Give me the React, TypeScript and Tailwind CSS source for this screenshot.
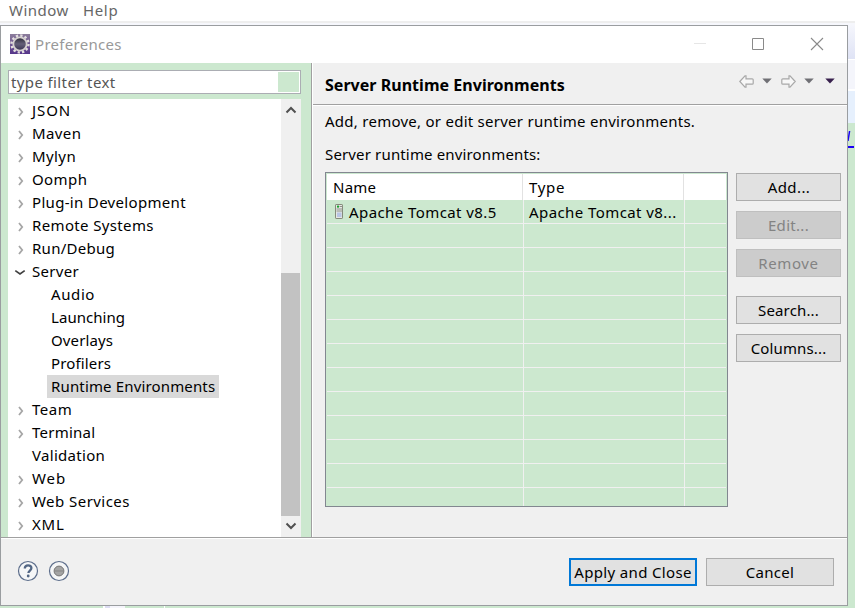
import React from "react";

type Item = { label: string; kind: "closed" | "open" | "leaf" | "child"; track: string; selected?: boolean };

const items: Item[] = [
  { label: "JSON", kind: "closed", track: "tracking-[0.9px]" },
  { label: "Maven", kind: "closed", track: "tracking-[0.4px]" },
  { label: "Mylyn", kind: "closed", track: "tracking-[0.4px]" },
  { label: "Oomph", kind: "closed", track: "tracking-[0.4px]" },
  { label: "Plug-in Development", kind: "closed", track: "tracking-[0.32px]" },
  { label: "Remote Systems", kind: "closed", track: "tracking-[0.36px]" },
  { label: "Run/Debug", kind: "closed", track: "tracking-[0.28px]" },
  { label: "Server", kind: "open", track: "tracking-[0.3px]" },
  { label: "Audio", kind: "child", track: "tracking-[0.6px]" },
  { label: "Launching", kind: "child", track: "tracking-[0.05px]" },
  { label: "Overlays", kind: "child", track: "tracking-[0.12px]" },
  { label: "Profilers", kind: "child", track: "tracking-[0.15px]" },
  { label: "Runtime Environments", kind: "child", track: "tracking-[0.15px]", selected: true },
  { label: "Team", kind: "closed", track: "tracking-[0.5px]" },
  { label: "Terminal", kind: "closed", track: "tracking-[0.25px]" },
  { label: "Validation", kind: "leaf", track: "tracking-[0.3px]" },
  { label: "Web", kind: "closed", track: "tracking-[0.9px]" },
  { label: "Web Services", kind: "closed", track: "tracking-[0.45px]" },
  { label: "XML", kind: "closed", track: "tracking-[0.8px]" },
];

function TreeRow({ item }: { item: Item }) {
  if (item.kind === "child") {
    return (
      <div className="flex h-[23px] pl-[39px]">
        <span className={`flex h-[23px] items-center whitespace-nowrap px-1 pb-0.5 ${item.track} ${item.selected ? "w-[172px] bg-[#d9d9d9]" : ""}`}>{item.label}</span>
      </div>
    );
  }
  return (
    <div className="flex h-[23px] items-center">
      <span className="flex w-6 shrink-0 justify-center">
        {item.kind === "closed" && (
          <svg className="ml-px mt-0.5" width="8" height="12" viewBox="0 0 8 12" fill="none" stroke="#a6a6a6" strokeWidth="1.8">
            <path d="M2 2 5.2 6 2 10" />
          </svg>
        )}
        {item.kind === "open" && (
          <svg width="12" height="8" viewBox="0 0 12 8" fill="none" stroke="#404040" strokeWidth="1.7">
            <path d="M1.3 2.6 6 6 10.7 2.6" />
          </svg>
        )}
      </span>
      <span className={`pb-0.5 ${item.track}`}>{item.label}</span>
    </div>
  );
}

function Button({ children, className = "" }: { children: React.ReactNode; className?: string }) {
  return (
    <button className={`flex h-7 shrink-0 items-center justify-center whitespace-nowrap ${className}`}>{children}</button>
  );
}

const enabled = "border border-[#adadad] bg-[#e1e1e1]";
const disabled = "border border-[#bfbfbf] bg-[#cccccc] text-[#838383]";

function GearIcon() {
  return (
    <svg className="mb-0.5" width="20" height="20" viewBox="0 0 20 20">
      <defs>
        <linearGradient id="gearBack" x1="0" y1="0" x2="0" y2="1">
          <stop offset="0" stopColor="#8c7d9b" />
          <stop offset="1" stopColor="#55358a" />
        </linearGradient>
        <linearGradient id="gearCore" x1="0" y1="0" x2="0" y2="1">
          <stop offset="0" stopColor="#292735" />
          <stop offset="0.5" stopColor="#646078" />
          <stop offset="1" stopColor="#35304f" />
        </linearGradient>
      </defs>
      <rect width="20" height="20" fill="url(#gearBack)" />
      <circle cx="10" cy="10" r="8.5" fill="none" stroke="#e4e0e0" strokeWidth="2.4" strokeDasharray="2.3 2.15" />
      <circle cx="10" cy="10" r="6.7" fill="url(#gearCore)" stroke="#d6d2d0" strokeWidth="1.8" />
    </svg>
  );
}

function Arrow({ flip = false }: { flip?: boolean }) {
  return (
    <svg className={flip ? "-scale-x-100" : ""} width="15" height="13" viewBox="0 0 15 13">
      <path d="M.8 6.5 6 .8h1v3h6.2q1 0 1 1v3.4q0 1-1 1H7v3H6Z" fill="#f7f7f7" stroke="#a8a8a8" strokeWidth="1.2" />
    </svg>
  );
}

function Caret({ color }: { color: string }) {
  return (
    <svg width="10" height="6" viewBox="0 0 10 6">
      <path d="M.3.5h9.4L5 5.4Z" fill={color} />
    </svg>
  );
}

function ScrollChevron({ up = false }: { up?: boolean }) {
  return (
    <svg className={up ? "mr-px" : "mb-px mr-px rotate-180"} width="12" height="8" viewBox="0 0 12 8" fill="none" stroke="#505050" strokeWidth="2">
      <path d="M1.5 6.5 6 2l4.5 4.5" />
    </svg>
  );
}

function ServerIcon() {
  return (
    <svg width="9" height="15" viewBox="0 0 9 15">
      <rect x=".5" y=".5" width="7" height="14" rx=".6" fill="#e5e7e3" stroke="#858a7b" />
      <rect x="2" y="1.6" width="2" height="2" fill="#18a52c" />
      <path d="M4.5 2.5h3M1.5 5h6M1.5 7h6" stroke="#8d9288" />
      <rect x="2" y="8.5" width="4.5" height="4.5" fill="#b9c5e4" />
    </svg>
  );
}

function LeftPane() {
  return (
    <div className="flex w-[310px] shrink-0 flex-col bg-[#cce8cf] pl-[7px] pt-[7px]">
      <div className="flex h-6 w-[293px] shrink-0 items-center justify-between border border-[#abadb3] bg-white pl-0.5 pr-px text-[#555]">
        <span className="tracking-[0.38px]">type filter text</span>
        <span className="h-5 w-[21px] bg-[#cce8cf]" />
      </div>
      <div className="mt-[5px] flex h-[438px] w-[293px] shrink-0 bg-white">
        <div className="flex-1">
          {items.map((item) => (
            <TreeRow key={item.label} item={item} />
          ))}
        </div>
        <div className="flex w-5 flex-col bg-[#f0f0f0]">
          <span className="flex h-[21px] items-center justify-center"><ScrollChevron up /></span>
          <span className="mt-[153px] h-[243px] w-[19px] bg-[#c2c2c2]" />
          <span className="flex h-[21px] items-center justify-center"><ScrollChevron /></span>
        </div>
      </div>
    </div>
  );
}

function RuntimeTable() {
  const grid = "grid grid-cols-[196px_161px_1fr]";
  return (
    <div className="h-[335px] w-[403px] shrink-0 overflow-hidden border border-[#828790] bg-[#cce8cf] p-px">
      <div className={`${grid} h-[26px] bg-white`}>
        <span className="flex items-center border-r border-[#e2e2e2] pl-1.5 tracking-[0.25px]">Name</span>
        <span className="flex items-center border-r border-[#e2e2e2] pl-1.5 tracking-[0.7px]">Type</span>
        <span />
      </div>
      {Array.from({ length: 13 }, (_, i) => (
        <div key={i} className={`${grid} ${i === 12 ? "h-[18px]" : "h-6 border-b border-[#f0f0f0]"}`}>
          <span className="mr-[-1px] flex items-center gap-[5px] border-r border-[#f0f0f0] pl-2">
            {i === 0 && (
              <>
                <ServerIcon />
                <span className="whitespace-nowrap tracking-[0.42px]">Apache Tomcat v8.5</span>
              </>
            )}
          </span>
          <span className="mr-[-1px] flex items-center whitespace-nowrap border-r border-[#f0f0f0] pl-1.5 tracking-[0.42px]">{i === 0 && "Apache Tomcat v8..."}</span>
          <span />
        </div>
      ))}
    </div>
  );
}

function RightPane() {
  return (
    <div className="flex min-w-0 flex-1 flex-col">
      <div className="flex h-[42px] shrink-0 items-center border-b border-[#a0a0a0] pl-3">
        <h1 className="mt-0.5 whitespace-nowrap text-base font-bold tracking-[0.03px] text-black">Server Runtime Environments</h1>
        <div className="mb-[5px] ml-auto flex items-center pr-3">
          <Arrow />
          <span className="ml-2"><Caret color="#707075" /></span>
          <span className="ml-[9px]"><Arrow flip /></span>
          <span className="ml-2"><Caret color="#707075" /></span>
          <span className="ml-[11px]"><Caret color="#38204d" /></span>
        </div>
      </div>
      <div className="flex-1 border-t border-white pl-3">
        <p className="mt-[5px] h-5 leading-5 tracking-[0.26px]">Add, remove, or edit server runtime environments.</p>
        <p className="mt-[13px] h-5 leading-5 tracking-[0.15px]">Server runtime environments:</p>
        <div className="mt-2 flex gap-2">
          <RuntimeTable />
          <div className="flex flex-col gap-2.5 pt-px">
            <Button className={`w-[105px] pl-px tracking-[0.4px] ${enabled}`}>Add...</Button>
            <Button className={`w-[105px] tracking-[0.3px] ${disabled}`}>Edit...</Button>
            <Button className={`w-[105px] tracking-[0.6px] ${disabled}`}>Remove</Button>
            <Button className={`mt-[9px] w-[105px] tracking-[0.15px] ${enabled}`}>Search...</Button>
            <Button className={`w-[105px] tracking-[0.15px] ${enabled}`}>Columns...</Button>
          </div>
        </div>
      </div>
    </div>
  );
}

function Dialog() {
  return (
    <div className="flex h-[581px] w-[848px] shrink-0 flex-col border border-[#9a9da0] bg-[#f0f0f0]">
      <div className="flex h-[37px] shrink-0 items-center bg-white pl-[9px] text-[#999]">
        <GearIcon />
        <span className="mb-0.5 ml-[5px] tracking-[0.3px]">Preferences</span>
        <svg className="mb-0.5 ml-auto mr-[22px]" width="132" height="14" viewBox="0 0 132 14" fill="none">
          <path d="M1 6.5h12" stroke="#e6e6e6" />
          <path d="M59.5 1.5h11v11h-11z" stroke="#8a8a8a" />
          <path d="M118 1l12 12M130 1l-12 12" stroke="#8a8a8a" strokeWidth="1.1" />
        </svg>
      </div>
      <div className="flex h-[474px] shrink-0">
        <LeftPane />
        <div className="w-0.5 shrink-0 border-l border-r border-l-[#a0a0a0] border-r-white" />
        <RightPane />
      </div>
      <div className="flex flex-1 items-center border-t border-[#a0a0a0] shadow-[inset_0_1px_0_#fff]">
        <svg className="mb-0.5 ml-4" width="22" height="22" viewBox="0 0 22 22">
          <circle cx="11" cy="11" r="9.5" fill="#f5f6f7" stroke="#5c6d8b" strokeWidth="1.2" />
          <path d="M7.8 8.6c0-4.4 6.6-4.2 6.6-.5 0 2.4-3 2.5-3 5" fill="none" stroke="#526684" strokeWidth="2.3" />
          <circle cx="11.2" cy="16" r="1.4" fill="#526684" />
        </svg>
        <svg className="mb-0.5 ml-[9px]" width="22" height="22" viewBox="0 0 22 22">
          <circle cx="11" cy="11" r="9.5" fill="#f5f6f7" stroke="#5c6d8b" strokeWidth="1.2" />
          <circle cx="11" cy="11" r="4.9" fill="#a4a4a4" stroke="#777" />
          <path d="M7 11h8" stroke="#858585" />
        </svg>
        <Button className="ml-auto w-32 border-2 border-[#0078d7] bg-[#e1e1e1] tracking-[0.35px]">Apply and Close</Button>
        <Button className={`ml-[9px] mr-[13px] w-32 tracking-[0.3px] ${enabled}`}>Cancel</Button>
      </div>
    </div>
  );
}

export default function App() {
  return (
    <div className="flex h-[608px] w-[855px] flex-col overflow-hidden bg-[#cce8cf] font-['Noto_Sans','Open_Sans',sans-serif] text-[15px] leading-5 text-black">
      <div className="flex h-[21px] shrink-0 gap-[14px] bg-white pl-[9px] text-[#666]">
        <span className="tracking-[0.5px]">Window</span>
        <span className="tracking-[0.7px]">Help</span>
      </div>
      <div className="h-1 shrink-0 border-t-2 border-[#eeeeee] bg-[#f6f7fc]" />
      <div className="flex h-[581px] shrink-0">
        <Dialog />
        <div className="flex w-[7px] flex-col">
          <span className="h-[34px] bg-linear-to-b from-[#f5f6fc] to-[#dfe3f5]" />
          <span className="h-[31px] border-y border-white bg-[#f4f5fb]" />
          <span className="h-[33px] border-t border-white bg-[#e6f0fd]" />
          <svg className="mt-2" width="7" height="18" viewBox="0 0 7 18">
            <path d="M1.6 0 0 10" stroke="#1c00f5" strokeWidth="1.5" />
            <path d="M0 16h6" stroke="#1c00f5" strokeWidth="2" />
          </svg>
        </div>
      </div>
      <div className="flex h-0.5 shrink-0">
        <span className="ml-[103px] w-0.5 bg-white" />
        <span className="w-[5px] bg-[#dcdcf2]" />
        <span className="w-[15px] bg-[#f5f5fb]" />
        <span className="ml-[39px] w-px bg-white" />
      </div>
    </div>
  );
}
